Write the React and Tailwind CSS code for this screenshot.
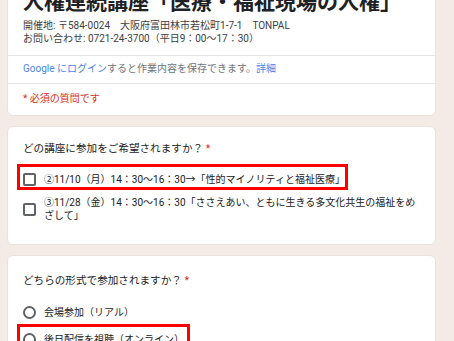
import React from "react";

function CheckOption({ children, marked }) {
  return (
    <div className="relative flex items-center gap-[8px]">
      <span className="shrink-0 w-[13px] h-[13px] border-2 border-[#5f6368] rounded-[2px]" />
      <span className="text-[10px] leading-[13px] text-[#202124]">{children}</span>
      {marked && (
        <span className="absolute left-[-6px] top-[-9px] w-[331px] h-[26px] border-[3px] border-[#ff0000]" />
      )}
    </div>
  );
}

function RadioOption({ children, marked }) {
  return (
    <div className="relative flex items-center gap-[8px]">
      <span className="shrink-0 w-[13px] h-[13px] border-2 border-[#5f6368] rounded-full" />
      <span className="text-[10px] leading-[13px] text-[#202124]">{children}</span>
      {marked && (
        <span className="absolute left-[-6px] top-[-9px] w-[173px] h-[26px] border-[3px] border-[#ff0000]" />
      )}
    </div>
  );
}

export default function App() {
  return (
    <div
      className="w-[454px] h-[341px] overflow-hidden bg-[#f5ebe6]"
      style={{ fontFamily: "Roboto, 'Noto Sans CJK JP', sans-serif" }}
    >
      <div className="ml-[7px] w-[429px] flex flex-col gap-[10px] mt-[-20px]">
        <div className="bg-white rounded-[6px] border border-[#e9e2dd]">
          <div className="px-[15px] pt-[7px] pb-[10px]">
            <h1 className="text-[21px] leading-[28px] font-bold text-[#202124] whitespace-nowrap mb-[4px]">
              人権連続講座「医療・福祉現場の人権」
            </h1>
            <p className="text-[10px] leading-[12.5px] text-[#3c4043]">
              開催地: 〒584-0024　大阪府富田林市若松町1-7-1　TONPAL
            </p>
            <p className="text-[10px] leading-[12.5px] text-[#3c4043]">
              お問い合わせ: 0721-24-3700（平日9：00～17：30）
            </p>
          </div>
          <div className="h-px bg-[#e6e6e6]" />
          <div className="px-[15px] pt-[6px] pb-[8px] text-[10px] leading-[13px]">
            <span className="text-[#4a86e8]">Google にログイン</span>
            <span className="text-[#70757a]">すると作業内容を保存できます。</span>
            <span className="text-[#4a86e8]">詳細</span>
          </div>
          <div className="h-px bg-[#e6e6e6]" />
          <div className="px-[15px] pt-[8px] pb-[10px] text-[10px] leading-[13px] text-[#d93025]">
            * 必須の質問です
          </div>
        </div>

        <div className="bg-white rounded-[6px] border border-[#e9e2dd] px-[15px] pt-[15px] pb-[22px]">
          <p className="text-[10.6px] leading-[14px] text-[#202124]">
            どの講座に参加をご希望されますか？<span className="text-[#d93025]"> *</span>
          </p>
          <div className="mt-[17px] flex flex-col gap-[10px]">
            <CheckOption marked>②11/10（月）14：30～16：30→「性的マイノリティと福祉医療」</CheckOption>
            <CheckOption>
              ③11/28（金）14：30～16：30「ささえあい、ともに生きる多文化共生の福祉をめざして」
            </CheckOption>
          </div>
        </div>

        <div className="bg-white rounded-[6px] border border-[#e9e2dd] px-[15px] pt-[18px] pb-[20px]">
          <p className="text-[10.6px] leading-[14px] text-[#202124]">
            どちらの形式で参加されますか？<span className="text-[#d93025]"> *</span>
          </p>
          <div className="mt-[18px] flex flex-col gap-[14px]">
            <RadioOption>会場参加（リアル）</RadioOption>
            <RadioOption marked>後日配信を視聴（オンライン）</RadioOption>
          </div>
        </div>
      </div>
    </div>
  );
}
